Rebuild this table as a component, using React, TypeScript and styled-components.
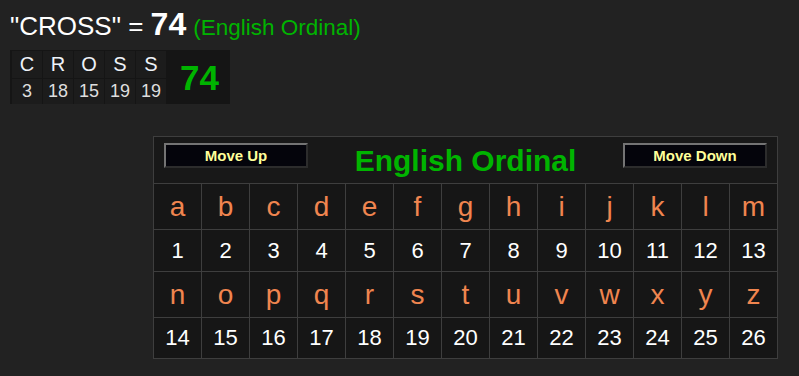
import React from "react";
import styled, { createGlobalStyle } from "styled-components";

const GlobalStyle = createGlobalStyle`
  html, body {
    margin: 0;
    padding: 0;
    background: #222222;
  }
  body {
    font-family: "Liberation Sans", Arial, sans-serif;
    color: #ffffff;
  }
`;

const Page = styled.div`
  padding: 0 0 20px 10px;
`;

const Heading = styled.div`
  display: flex;
  align-items: baseline;
  height: 44px;
  padding-top: 3px;
  box-sizing: border-box;
  line-height: 42px;
  white-space: pre;
`;

const Phrase = styled.span`
  font-size: 26px;
  color: #ffffff;
`;

const Score = styled.span`
  font-size: 32px;
  font-weight: bold;
  color: #ffffff;
`;

const CipherLabel = styled.span`
  font-size: 22.5px;
  color: #00b400;
  margin-left: 7px;
`;

const WordBox = styled.div`
  display: inline-flex;
  margin-top: 6px;
  background: #151515;
  padding: 1px 0 0 2px;
`;

const LetterGrid = styled.div`
  display: grid;
  grid-template-columns: repeat(5, 30px);
  grid-template-rows: 27px 25px;
  gap: 1px;
`;

const WordCell = styled.div<{ $value?: boolean }>`
  display: flex;
  align-items: center;
  justify-content: center;
  background: #1c1c1c;
  font-size: ${(p) => (p.$value ? "18px" : "20px")};
  color: ${(p) => (p.$value ? "#dedede" : "#eef2f8")};
`;

const WordTotal = styled.div`
  width: 64px;
  box-sizing: border-box;
  display: flex;
  align-items: center;
  justify-content: center;
  font-size: 35px;
  font-weight: bold;
  color: #00b400;
  padding: 1px 0 0 3px;
`;

const Panel = styled.div`
  margin: 32px 0 0 143px;
  width: max-content;
  display: grid;
  grid-template-columns: repeat(13, 47px);
  grid-template-rows: 46px 45px 41px 45px 40px;
  gap: 1px;
  padding: 1px;
  background: #3e3e3e;
`;

const PanelHeader = styled.div`
  grid-column: 1 / -1;
  background: #181818;
  display: flex;
  align-items: center;
  justify-content: space-between;
  padding: 0 10px 0 10px;
`;

const MoveButton = styled.button`
  align-self: flex-start;
  margin-top: 6px;
  width: 144px;
  height: 25px;
  padding: 0;
  background: #04040b;
  border: 2px solid;
  border-color: #747474 #2c2c2c #2c2c2c #747474;
  color: #ffff99;
  font-family: "Liberation Sans", Arial, sans-serif;
  font-size: 15px;
  font-weight: bold;
  cursor: pointer;
`;

const PanelTitle = styled.div`
  font-size: 30px;
  font-weight: bold;
  color: #00b400;
  padding-top: 1px;
`;

const GridCell = styled.div<{ $letter?: boolean }>`
  background: #161616;
  display: flex;
  align-items: center;
  justify-content: center;
  font-size: ${(p) => (p.$letter ? "28px" : "22px")};
  color: ${(p) => (p.$letter ? "#f0854f" : "#ffffff")};
`;

const word = "CROSS";
const alphabet = "abcdefghijklmnopqrstuvwxyz".split("");

const valueOf = (ch: string) => ch.toLowerCase().charCodeAt(0) - 96;

export default function App() {
  const total = word.split("").reduce((s, c) => s + valueOf(c), 0);
  const firstHalf = alphabet.slice(0, 13);
  const secondHalf = alphabet.slice(13);

  return (
    <Page>
      <GlobalStyle />
      <Heading>
        <Phrase>"{word}" = </Phrase>
        <Score>{total}</Score>
        <CipherLabel>(English Ordinal)</CipherLabel>
      </Heading>

      <WordBox>
        <LetterGrid>
          {word.split("").map((c, i) => (
            <WordCell key={`l${i}`}>{c}</WordCell>
          ))}
          {word.split("").map((c, i) => (
            <WordCell key={`v${i}`} $value>
              {valueOf(c)}
            </WordCell>
          ))}
        </LetterGrid>
        <WordTotal>{total}</WordTotal>
      </WordBox>

      <Panel>
        <PanelHeader>
          <MoveButton>Move Up</MoveButton>
          <PanelTitle>English Ordinal</PanelTitle>
          <MoveButton>Move Down</MoveButton>
        </PanelHeader>
        {firstHalf.map((c) => (
          <GridCell key={c} $letter>
            {c}
          </GridCell>
        ))}
        {firstHalf.map((c) => (
          <GridCell key={`n${c}`}>{valueOf(c)}</GridCell>
        ))}
        {secondHalf.map((c) => (
          <GridCell key={c} $letter>
            {c}
          </GridCell>
        ))}
        {secondHalf.map((c) => (
          <GridCell key={`n${c}`}>{valueOf(c)}</GridCell>
        ))}
      </Panel>
    </Page>
  );
}
